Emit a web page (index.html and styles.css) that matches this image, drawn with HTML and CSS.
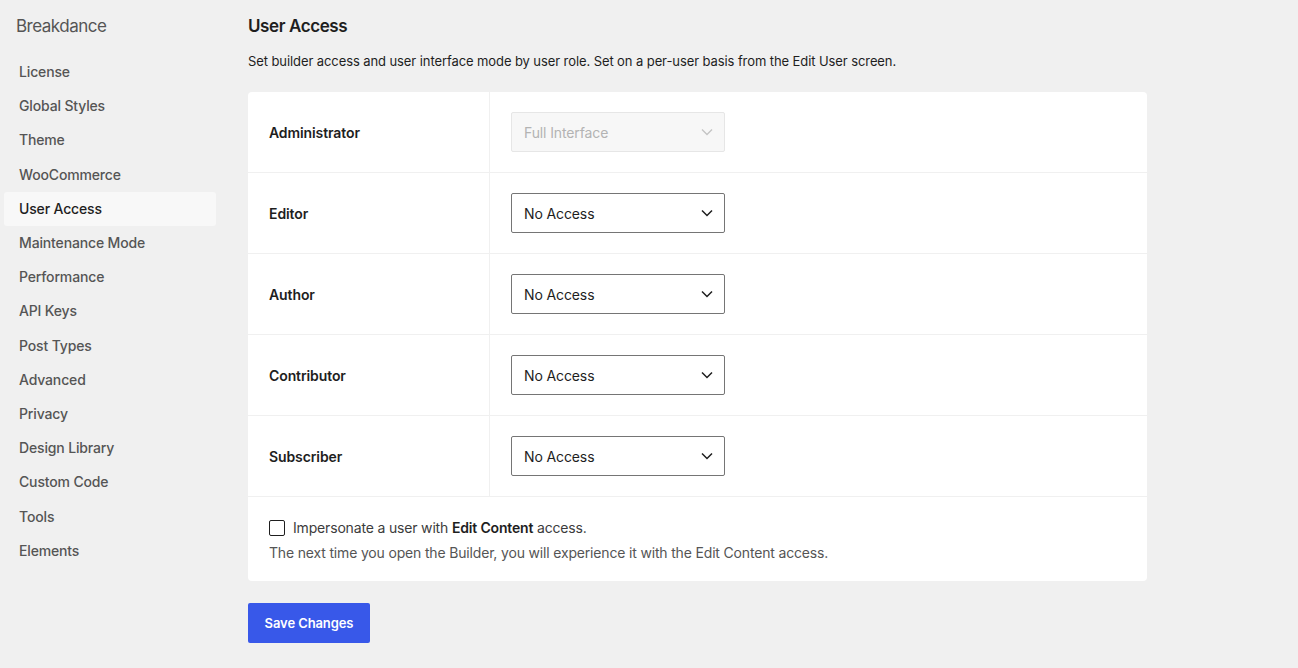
FILE: index.html
```html
<!DOCTYPE html>
<html lang="en">
<head>
<meta charset="utf-8">
<title>Breakdance - User Access</title>
<link rel="stylesheet" href="styles.css">
</head>
<body>
<div class="layout">
  <aside class="sidebar">
    <div class="brand">Breakdance</div>
    <nav class="nav">
      <a class="nav-item">License</a>
      <a class="nav-item">Global Styles</a>
      <a class="nav-item">Theme</a>
      <a class="nav-item">WooCommerce</a>
      <a class="nav-item active">User Access</a>
      <a class="nav-item">Maintenance Mode</a>
      <a class="nav-item">Performance</a>
      <a class="nav-item">API Keys</a>
      <a class="nav-item">Post Types</a>
      <a class="nav-item">Advanced</a>
      <a class="nav-item">Privacy</a>
      <a class="nav-item">Design Library</a>
      <a class="nav-item">Custom Code</a>
      <a class="nav-item">Tools</a>
      <a class="nav-item">Elements</a>
    </nav>
  </aside>
  <main class="main">
    <h1 class="title">User Access</h1>
    <p class="desc">Set builder access and user interface mode by user role. Set on a per-user basis from the Edit User screen.</p>
    <div class="card">
      <div class="cell label">Administrator</div>
      <div class="cell">
        <div class="select disabled"><span>Full Interface</span><svg class="chev" width="12" height="8" viewBox="0 0 12 8"><path d="M1 1.5 6 6.5 11 1.5" fill="none" stroke="currentColor" stroke-width="1.3"/></svg></div>
      </div>
      <div class="cell label">Editor</div>
      <div class="cell">
        <div class="select"><span>No Access</span><svg class="chev" width="12" height="8" viewBox="0 0 12 8"><path d="M1 1.5 6 6.5 11 1.5" fill="none" stroke="currentColor" stroke-width="1.5"/></svg></div>
      </div>
      <div class="cell label">Author</div>
      <div class="cell">
        <div class="select"><span>No Access</span><svg class="chev" width="12" height="8" viewBox="0 0 12 8"><path d="M1 1.5 6 6.5 11 1.5" fill="none" stroke="currentColor" stroke-width="1.5"/></svg></div>
      </div>
      <div class="cell label">Contributor</div>
      <div class="cell">
        <div class="select"><span>No Access</span><svg class="chev" width="12" height="8" viewBox="0 0 12 8"><path d="M1 1.5 6 6.5 11 1.5" fill="none" stroke="currentColor" stroke-width="1.5"/></svg></div>
      </div>
      <div class="cell label">Subscriber</div>
      <div class="cell">
        <div class="select"><span>No Access</span><svg class="chev" width="12" height="8" viewBox="0 0 12 8"><path d="M1 1.5 6 6.5 11 1.5" fill="none" stroke="currentColor" stroke-width="1.5"/></svg></div>
      </div>
      <div class="cell wide">
        <label class="check-line"><span class="checkbox"></span><span>Impersonate a user with <strong>Edit Content</strong> access.</span></label>
        <p class="hint">The next time you open the Builder, you will experience it with the Edit Content access.</p>
      </div>
    </div>
    <button class="save">Save Changes</button>
  </main>
</div>
</body>
</html>
```
FILE: styles.css
```css
* { box-sizing: border-box; }
html, body { margin: 0; padding: 0; }
body {
  background: #f0f0f0;
  font-family: Inter, "Noto Sans", "Liberation Sans", sans-serif;
  color: #1e1e1e;
  width: 1298px;
  height: 668px;
  overflow: hidden;
}
.layout {
  display: flex;
  gap: 32px;
}
.sidebar {
  width: 216px;
  flex: none;
  padding: 14px 0 0 4px;
}
.brand {
  font-size: 17px;
  line-height: 24px;
  letter-spacing: -0.5px;
  color: #555;
  padding-left: 12px;
  margin-bottom: 17px;
}
.nav {
  display: flex;
  flex-direction: column;
}
.nav-item {
  display: block;
  font-size: 14px;
  line-height: 20.2px;
  letter-spacing: -0.15px;
  padding: 7px 15px;
  color: #555;
  font-weight: 500;
  border-radius: 3px;
}
.nav-item.active {
  background: #f8f8f8;
  color: #1e1e1e;
}
.main {
  width: 899px;
  padding-top: 14px;
}
.title {
  margin: 0;
  font-size: 17px;
  line-height: 24px;
  letter-spacing: -0.4px;
  font-weight: 600;
}
.desc {
  margin: 13px 0 0;
  font-size: 13px;
  line-height: 20px;
  letter-spacing: -0.09px;
  color: #1e1e1e;
}
.card {
  margin-top: 21px;
  display: grid;
  grid-template-columns: 241px 1fr;
  gap: 1px;
  background: #f0f0f0;
  border-radius: 4px;
  overflow: hidden;
}
.cell {
  background: #fff;
  height: 80px;
  display: flex;
  align-items: center;
  padding: 0 21px;
}
.cell.label {
  font-size: 14px;
  font-weight: 600;
  letter-spacing: -0.1px;
}
.cell.wide {
  grid-column: 1 / -1;
  height: 84px;
  display: block;
  padding: 21px 21px 0;
}
.select {
  width: 214px;
  height: 40px;
  border: 1px solid #757575;
  border-radius: 2px;
  display: flex;
  align-items: center;
  justify-content: space-between;
  padding: 0 11px 0 12px;
  font-size: 14px;
  letter-spacing: -0.12px;
  color: #1e1e1e;
}
.chev { color: #1e1e1e; }
.select.disabled {
  background: #f7f7f7;
  border-color: #e6e6e6;
  color: #b3b3b3;
}
.select.disabled .chev { color: #c4c4c4; }
.check-line {
  display: flex;
  align-items: center;
  font-size: 14px;
  line-height: 20px;
  letter-spacing: -0.17px;
  color: #3c3c3c;
}
.check-line strong { font-weight: 600; color: #1e1e1e; }
.checkbox {
  width: 16px;
  height: 16px;
  border: 1.5px solid #1e1e1e;
  border-radius: 2px;
  margin-right: 8px;
  flex: none;
}
.hint {
  margin: 5px 0 0;
  font-size: 14px;
  line-height: 20px;
  letter-spacing: -0.17px;
  color: #555;
}
.save {
  margin-top: 22px;
  width: 122px;
  height: 40px;
  border: 0;
  border-radius: 2px;
  background: #3858e9;
  color: #fff;
  font-family: inherit;
  font-size: 13px;
  letter-spacing: -0.1px;
  font-weight: 600;
}
```
